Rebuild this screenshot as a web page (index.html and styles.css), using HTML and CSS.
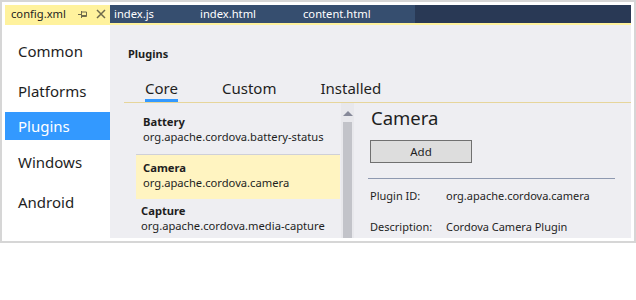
FILE: index.html
```html
<!DOCTYPE html>
<html>
<head>
<meta charset="utf-8">
<link rel="stylesheet" href="styles.css">
</head>
<body>
<div class="frame">
  <div class="tabbar">
    <div class="doc-tab doc-tab--active">
      <span class="doc-tab__name">config.xml</span>
      <svg class="doc-tab__pin" width="10" height="10" viewBox="0 0 10 10"><path d="M0 5.5H3.5M3.5 2V9M3.5 3H8.5V7.5H3.5M3.5 6.5H8.5" fill="none" stroke="#6e6a4c" stroke-width="1"/></svg>
      <svg class="doc-tab__close" width="10" height="10" viewBox="0 0 10 10"><path d="M1 1L9 9M9 1L1 9" stroke="#6e6a4c" stroke-width="1.5"/></svg>
    </div>
    <div class="doc-tab doc-tab--w1">index.js</div>
    <div class="doc-tab doc-tab--w2">index.html</div>
    <div class="doc-tab doc-tab--w3">content.html</div>
  </div>
  <div class="body">
    <nav class="sidebar">
      <div class="nav-item nav-item--common">Common</div>
      <div class="nav-item nav-item--platforms">Platforms</div>
      <div class="nav-item nav-item--selected">Plugins</div>
      <div class="nav-item nav-item--windows">Windows</div>
      <div class="nav-item nav-item--android">Android</div>
    </nav>
    <main class="content">
      <h1 class="content__title">Plugins</h1>
      <div class="tabs">
        <div class="tab tab--active">Core</div>
        <div class="tab tab--custom">Custom</div>
        <div class="tab tab--installed">Installed</div>
      </div>
      <div class="panes">
        <div class="list">
          <div class="list__items">
            <div class="item item--first">
              <div class="item__name">Battery</div>
              <div class="item__id">org.apache.cordova.battery-status</div>
            </div>
            <div class="item item--selected">
              <div class="item__name">Camera</div>
              <div class="item__id">org.apache.cordova.camera</div>
            </div>
            <div class="item item--shifted">
              <div class="item__name">Capture</div>
              <div class="item__id">org.apache.cordova.media-capture</div>
            </div>
          </div>
          <div class="scrollbar">
            <div class="scrollbar__arrow"></div>
            <div class="scrollbar__thumb"></div>
          </div>
        </div>
        <div class="detail">
          <div class="detail__title">Camera</div>
          <button class="detail__button">Add</button>
          <div class="detail__rule"></div>
          <div class="detail__row"><span class="detail__label">Plugin ID:</span><span>org.apache.cordova.camera</span></div>
          <div class="detail__row detail__row--desc"><span class="detail__label">Description:</span><span>Cordova Camera Plugin</span></div>
        </div>
      </div>
    </main>
  </div>
</div>
</body>
</html>
```
FILE: styles.css
```css
* { box-sizing: border-box; }
html, body { margin: 0; padding: 0; background: #fff; }
body { font-family: "Noto Sans", "Open Sans", sans-serif; color: #1e1e1e; }

.frame {
  width: 636px;
  height: 243px;
  border: 2px solid #d6d6d6;
  padding: 3px;
  display: flex;
  flex-direction: column;
  background: #fff;
}

.tabbar {
  height: 20px;
  display: flex;
  background: #293955;
  border-bottom: 2px solid #fff29d;
  flex: none;
}
.doc-tab {
  height: 18px;
  background: #364e6f;
  color: #fff;
  font-size: 11.2px;
  line-height: 18px;
  padding-left: 4px;
  white-space: nowrap;
}
.doc-tab--active {
  width: 105px;
  background: #fff29d;
  color: #1e1e1e;
  padding-left: 6px;
  display: flex;
  align-items: center;
}
.doc-tab__name { width: 67px; }
.doc-tab__pin { margin-right: 8px; }
.doc-tab--w1 { width: 86px; }
.doc-tab--w2 { width: 103px; }
.doc-tab--w3 { width: 116px; }

.body {
  flex: 1;
  display: flex;
  min-height: 0;
}

.sidebar {
  width: 105px;
  flex: none;
  background: #fff;
  padding-top: 12px;
}
.nav-item {
  height: 28px;
  font-size: 15px;
  line-height: 28px;
  padding-left: 13px;
  color: #1e1e1e;
}
.nav-item--platforms { margin-top: 12px; }
.nav-item--selected { margin-top: 7px; background: #3399ff; color: #fff; }
.nav-item--windows { margin-top: 8px; }
.nav-item--android { margin-top: 12px; }

.content {
  flex: 1;
  background: #eeeef2;
  padding: 0 0 0 14px;
  display: flex;
  flex-direction: column;
  min-width: 0;
}
.content__title {
  margin: 21px 0 0 4px;
  font-size: 11px;
  font-weight: bold;
  line-height: 16px;
}
.tabs {
  display: flex;
  margin-top: 16px;
  border-bottom: 1px solid #e6d59b;
  height: 25px;
  padding-left: 21px;
}
.tab {
  font-size: 15px;
  line-height: 21px;
  height: 24px;
}
.tab--active { border-bottom: 3px solid #3399ff; width: 33px; }
.tab--custom { margin-left: 44px; }
.tab--installed { margin-left: 44px; }

.panes {
  flex: 1;
  display: flex;
  min-height: 0;
}
.list {
  width: 230px;
  flex: none;
  display: flex;
  padding-left: 12px;
}
.list__items {
  flex: 1;
  padding-top: 8px;
  overflow: hidden;
}
.item {
  height: 44px;
  padding: 5px 7px;
  font-size: 11.2px;
  line-height: 15px;
  white-space: nowrap;
}
.item--first { border-bottom: 1px solid #cfd0d8; padding-top: 3px; }
.item--selected { background: #fff4c1; }
.item--shifted { padding-left: 5px; padding-top: 4px; }
.item__name { font-weight: bold; }

.scrollbar {
  width: 13px;
  flex: none;
  background: #e8e8ec;
  padding: 8px 2px 0;
  display: flex;
  flex-direction: column;
  align-items: center;
  margin-left: 1px;
}
.scrollbar__arrow {
  width: 0; height: 0;
  border-left: 5px solid transparent;
  border-right: 5px solid transparent;
  border-bottom: 5px solid #868999;
}
.scrollbar__thumb {
  width: 9px;
  flex: 1;
  margin-top: 6px;
  background: #c2c3c9;
}

.detail {
  flex: 1;
  padding: 1px 16px 0 16px;
}
.detail__title {
  font-size: 18.5px;
  line-height: 28px;
  margin-left: 1px;
}
.detail__button {
  display: block;
  margin-top: 8px;
  width: 102px;
  height: 23px;
  background: #dddddd;
  border: 1px solid #707070;
  font-family: inherit;
  font-size: 11.5px;
  color: #1e1e1e;
  padding: 0;
}
.detail__rule {
  margin: 15px 0 0 -2px;
  width: 247px;
  height: 1px;
  background: #8e99b0;
}
.detail__row {
  margin-top: 9px;
  font-size: 11px;
  line-height: 16px;
  display: flex;
}
.detail__row--desc { margin-top: 15px; }
.detail__label { width: 76px; flex: none; }
```
